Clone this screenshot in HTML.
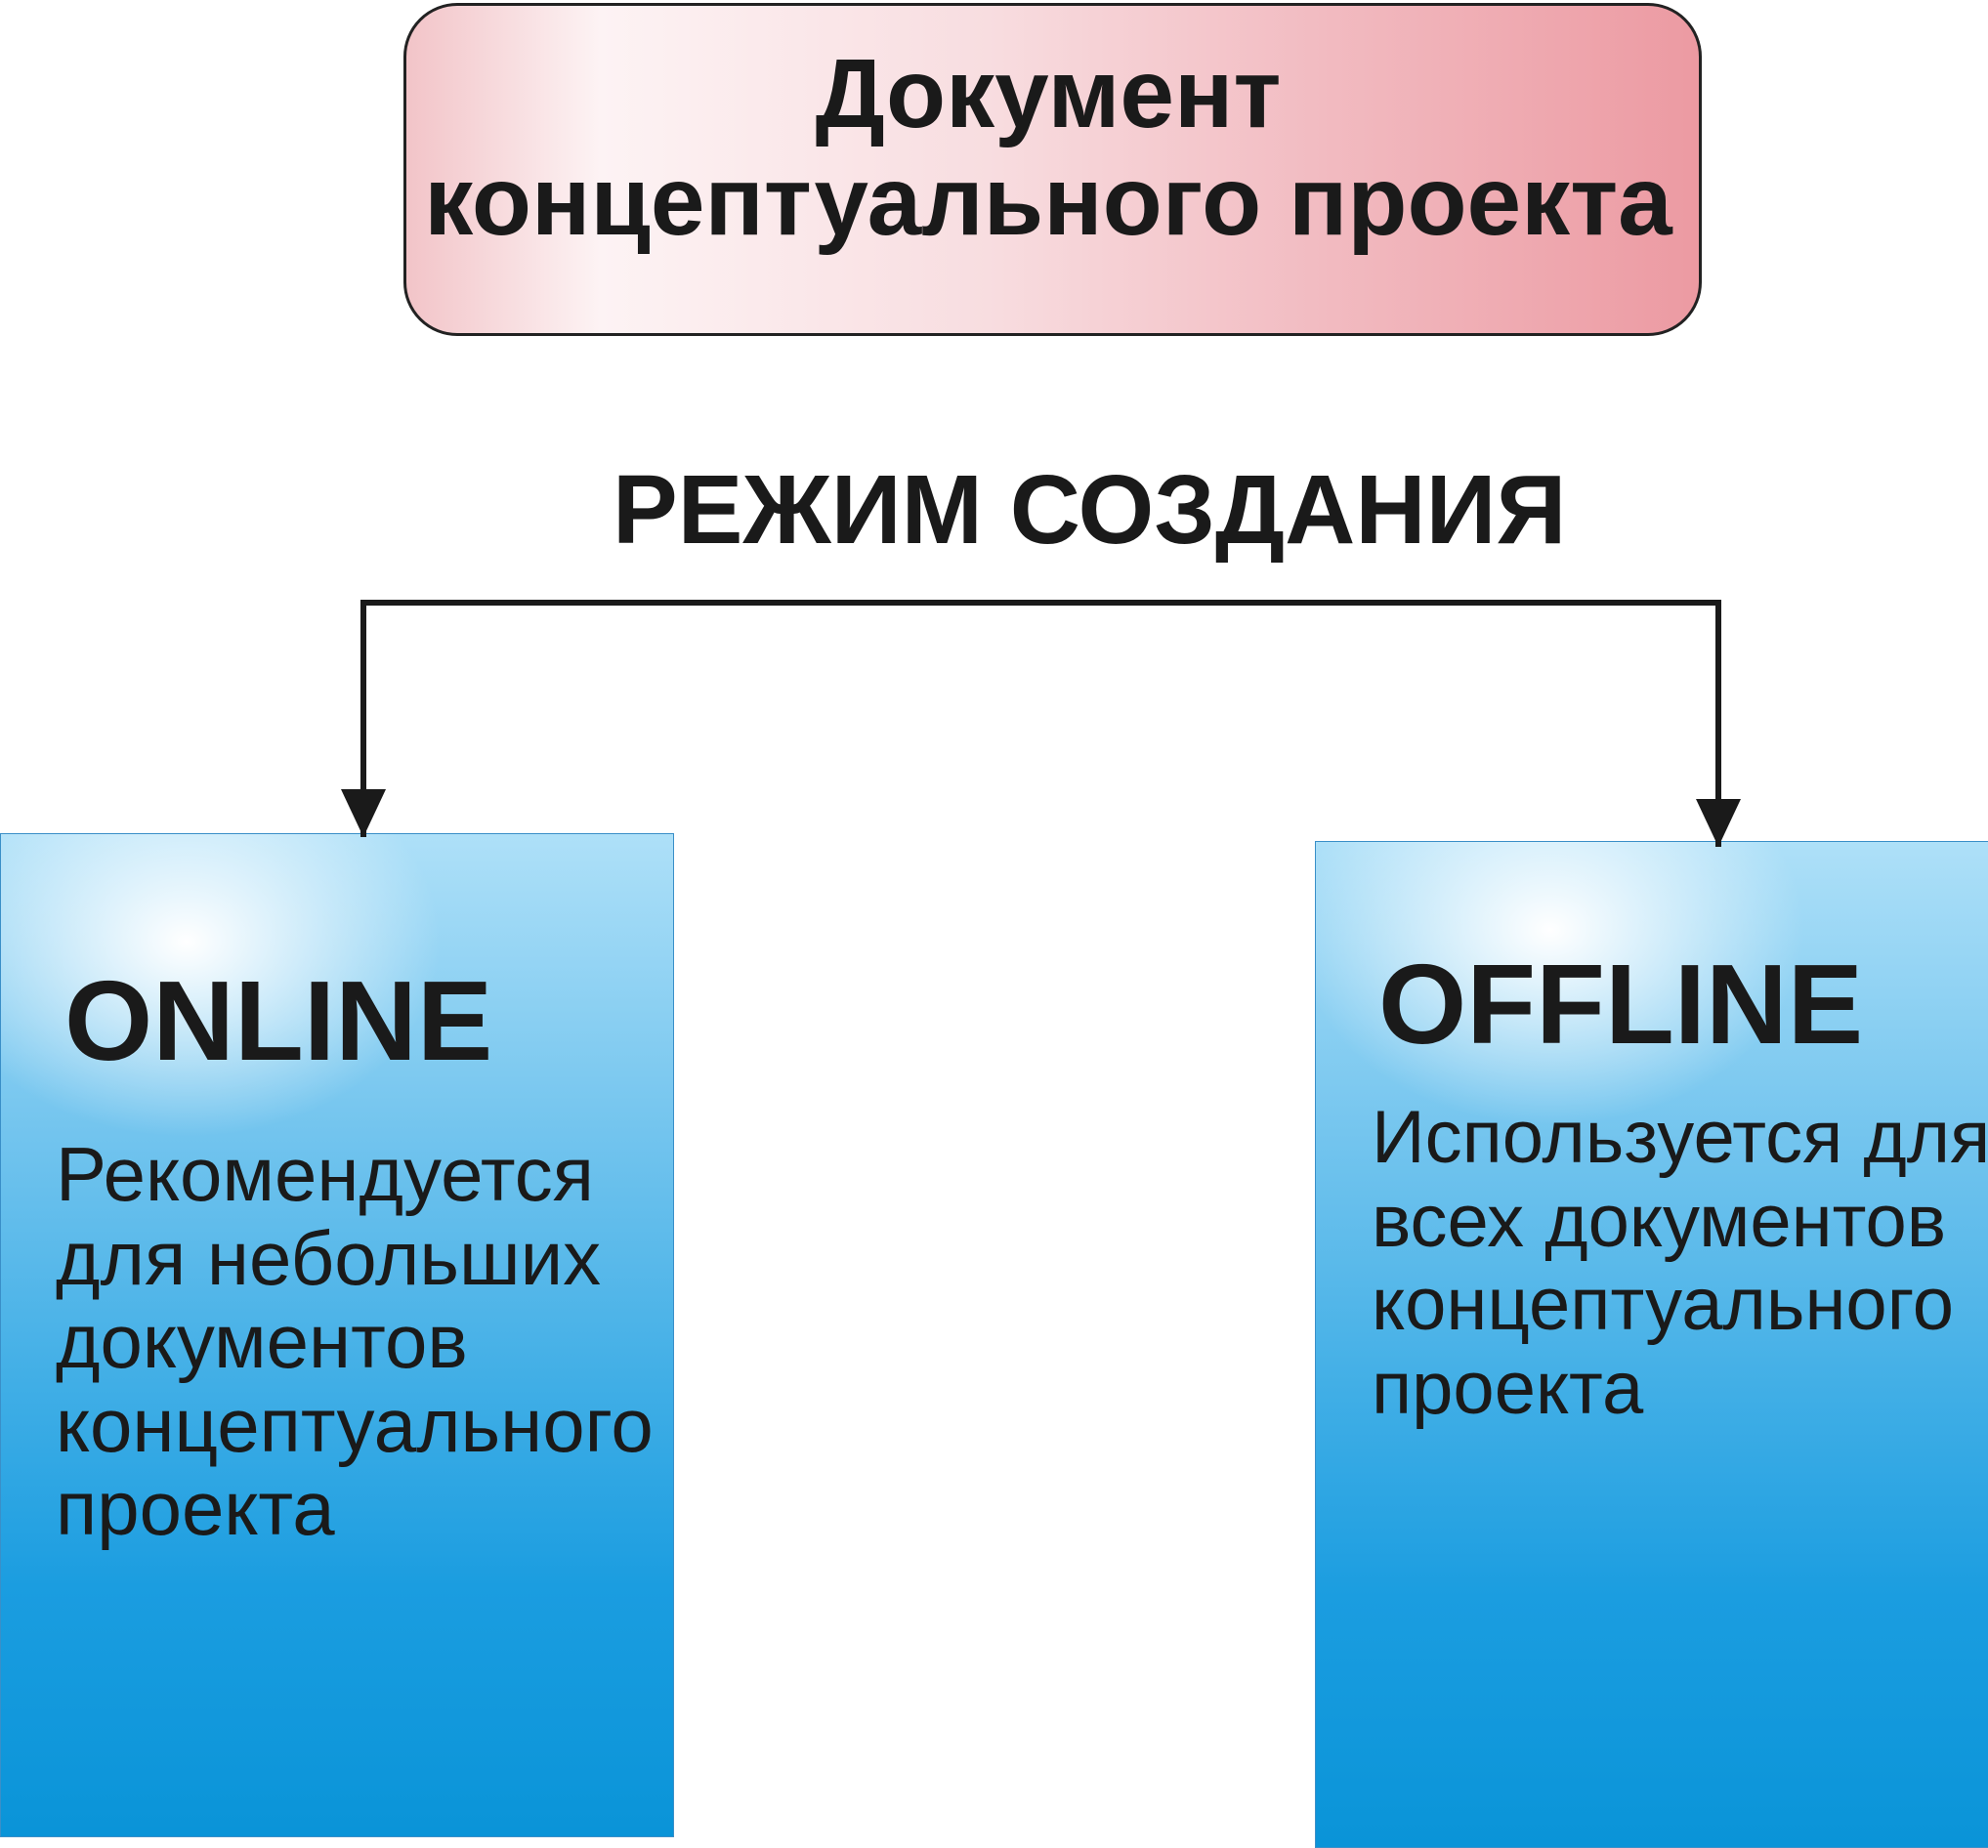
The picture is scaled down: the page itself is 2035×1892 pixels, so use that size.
<!DOCTYPE html>
<html><head><meta charset="utf-8"><style>
body{margin:0;width:2035px;height:1890px;background:#fff;position:relative;overflow:hidden;font-family:"Liberation Sans",sans-serif;color:#1a1a1a}
.top{position:absolute;left:413px;top:3px;width:1323px;height:335px;border:3px solid #222;border-radius:55px;background:linear-gradient(90deg,#f2c4c8 0%,#fdf3f4 15%,#f8dde0 45%,#f2bcc2 70%,#ec9aa2 100%)}
.t{position:absolute;white-space:nowrap;font-weight:bold}
.box{position:absolute;border:1px solid #3a8fc8}
.l{left:0;top:853px;width:688px;height:1026px;background:radial-gradient(ellipse 260px 200px at 190px 110px,#ffffff 0%,rgba(255,255,255,0) 100%),linear-gradient(180deg,#aee0f8 0%,#72c4ee 30%,#40aee6 55%,#1b9de0 75%,#0a94d8 100%)}
.r{left:1346px;top:861px;width:689px;height:1029px;background:radial-gradient(ellipse 260px 200px at 240px 90px,#ffffff 0%,rgba(255,255,255,0) 100%),linear-gradient(180deg,#aee0f8 0%,#72c4ee 30%,#40aee6 55%,#1b9de0 75%,#0a94d8 100%)}
.p{position:absolute;font-size:78px;line-height:85.5px;white-space:nowrap}
</style></head><body>
<div class="top"></div>
<div class="t" style="left:0;width:2146px;text-align:center;top:41px;font-size:100px;line-height:110px">Документ<br>концептуального проекта</div>
<div class="t" style="left:627px;top:462px;font-size:100px;line-height:120px">РЕЖИМ СОЗДАНИЯ</div>
<div class="box l"></div>
<div class="box r"></div>
<svg style="position:absolute;left:0;top:0" width="2035" height="1890">
<polyline points="372,857 372,617 1759,617 1759,867" fill="none" stroke="#1a1a1a" stroke-width="6"/>
<polygon points="349,808 395,808 372,857" fill="#1a1a1a"/>
<polygon points="1736,818 1782,818 1759,867" fill="#1a1a1a"/>
</svg>
<div class="t" style="left:66px;top:980px;font-size:116px;line-height:130px">ONLINE</div>
<div class="p" style="left:57px;top:1160px">Рекомендуется<br>для небольших<br>документов<br>концептуального<br>проекта</div>
<div class="t" style="left:1411px;top:963px;font-size:116px;line-height:130px">OFFLINE</div>
<div class="p" style="left:1404px;top:1122px;font-size:76px">Используется для<br>всех документов<br>концептуального<br>проекта</div>
</body></html>
